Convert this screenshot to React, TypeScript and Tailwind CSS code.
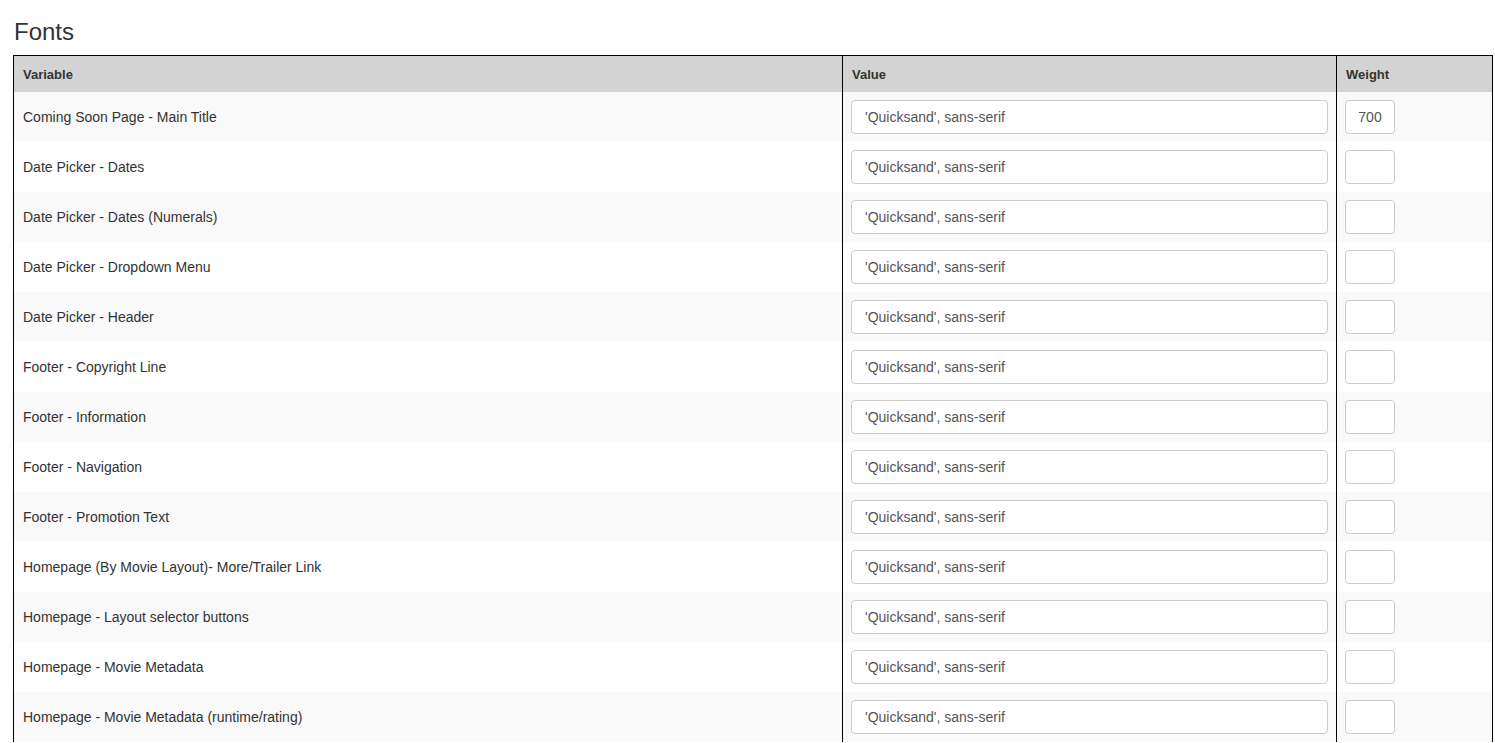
import React from "react"

const rows: { name: string; weight: string }[] = [
  { name: "Coming Soon Page - Main Title", weight: "700" },
  { name: "Date Picker - Dates", weight: "" },
  { name: "Date Picker - Dates (Numerals)", weight: "" },
  { name: "Date Picker - Dropdown Menu", weight: "" },
  { name: "Date Picker - Header", weight: "" },
  { name: "Footer - Copyright Line", weight: "" },
  { name: "Footer - Information", weight: "" },
  { name: "Footer - Navigation", weight: "" },
  { name: "Footer - Promotion Text", weight: "" },
  { name: "Homepage (By Movie Layout)- More/Trailer Link", weight: "" },
  { name: "Homepage - Layout selector buttons", weight: "" },
  { name: "Homepage - Movie Metadata", weight: "" },
  { name: "Homepage - Movie Metadata (runtime/rating)", weight: "" },
]

export default function App() {
  return (
    <div className="min-h-screen bg-white px-[13px] text-[#333] font-['Liberation_Sans',Arial,sans-serif]">
      <h3 className="pt-[18px] pb-[9px] text-[24px] leading-[28px] pl-px">Fonts</h3>
      <table className="w-[1480px] table-fixed border-collapse border-x border-t border-black text-[14px]">
        <colgroup>
          <col className="w-[829px]" />
          <col className="w-[494px]" />
          <col />
        </colgroup>
        <thead>
          <tr className="bg-[#d3d3d3]">
            <th className="h-[36px] px-[9px] pt-[2px] text-left text-[13px] font-bold">Variable</th>
            <th className="border-l border-black px-[9px] pt-[2px] text-left text-[13px] font-bold">Value</th>
            <th className="border-l border-black px-[9px] pt-[2px] text-left text-[13px] font-bold">Weight</th>
          </tr>
        </thead>
        <tbody>
          {rows.map((r, i) => (
            <tr key={i} className={i % 2 === 0 ? "bg-[#f9f9f9]" : "bg-white"}>
              <td className="h-[50px] px-[9px] pt-[2px]">{r.name}</td>
              <td className="border-l border-black px-2">
                <input
                  readOnly
                  value="'Quicksand', sans-serif"
                  className="block h-[34px] w-full rounded border border-[#ccc] bg-white px-[13px] text-[14px] text-[#555] outline-none"
                />
              </td>
              <td className="border-l border-black px-2">
                <input
                  readOnly
                  value={r.weight}
                  className="block h-[34px] w-[50px] rounded border border-[#ccc] bg-white px-[6px] text-center text-[14px] text-[#555] outline-none"
                />
              </td>
            </tr>
          ))}
        </tbody>
      </table>
    </div>
  )
}
